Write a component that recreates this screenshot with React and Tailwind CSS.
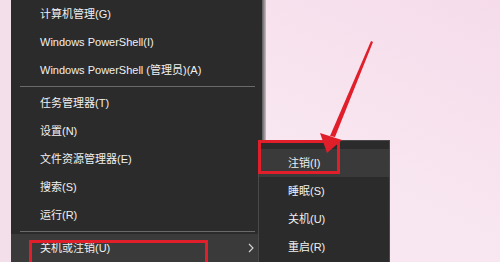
const font = { fontFamily: "'Liberation Sans', 'Noto Sans CJK SC', sans-serif" }

const topItems = ['计算机管理(G)', 'Windows PowerShell(I)', 'Windows PowerShell (管理员)(A)']
const midItems = ['任务管理器(T)', '设置(N)', '文件资源管理器(E)', '搜索(S)', '运行(R)']
const subItems = ['注销(I)', '睡眠(S)', '关机(U)', '重启(R)']

function MenuRow({ label }) {
  return (
    <div className="h-[28.5px] flex items-center pl-[29px] text-[11px] text-[#f0f0f0] whitespace-nowrap">
      {label}
    </div>
  )
}

function Separator() {
  return (
    <div className="h-[5px] flex items-center pl-[9px] pr-[7px]">
      <div className="h-px w-full bg-[#6a6a6a]" />
    </div>
  )
}

export default function App() {
  return (
    <div
      className="relative w-[500px] h-[262px] overflow-hidden flex bg-gradient-to-bl from-[#f6dceb] via-[#f8e7f0] to-[#f8e8f0]"
      style={font}
    >
      <div className="w-[11px] bg-[#f3dfe9]" />
      <div className="w-[251px] bg-[#2b2b2b] flex flex-col">
        {topItems.map((t) => (
          <MenuRow key={t} label={t} />
        ))}
        <Separator />
        {midItems.map((t) => (
          <MenuRow key={t} label={t} />
        ))}
        <Separator />
        <div className="h-[28.5px] flex items-center justify-between pl-[29px] pr-[8px] bg-[#3a3a3a] text-[11px] text-[#f0f0f0]">
          <span>关机或注销(U)</span>
          <svg width="6" height="10" viewBox="0 0 6 10" fill="none">
            <path d="M1 1l4 4-4 4" stroke="#d8d8d8" strokeWidth="1.1" />
          </svg>
        </div>
      </div>
      <div className="w-[4px] bg-gradient-to-r from-[#5a5a5a] to-[#c9c0c5]" />
      <div className="flex-1" />

      {/* submenu */}
      <div className="absolute left-[258px] top-[140px] w-[132px] h-[130px] bg-[#2b2b2b] border border-[#4a4a4a] pt-[8px]">
        {subItems.map((t, i) => (
          <div
            key={t}
            className={`h-[28px] flex items-center pl-[29px] text-[11px] text-[#f0f0f0] ${i === 0 ? 'bg-[#3a3a3a]' : ''}`}
          >
            {t}
          </div>
        ))}
      </div>

      {/* red highlight boxes */}
      <div className="absolute left-[29px] top-[240px] w-[179px] h-[30px] border-[3px] border-[#e01f2b]" />
      <div className="absolute left-[258px] top-[140px] w-[82px] h-[34px] border-[3px] border-[#e01f2b]" />

      {/* arrow */}
      <svg className="absolute left-0 top-0" width="500" height="262" viewBox="0 0 500 262">
        <polygon points="371,41 373,42 335,137 330,136" fill="#e01f2b" />
        <polygon points="327,153 320,133 342,140" fill="#e01f2b" />
      </svg>
    </div>
  )
}
